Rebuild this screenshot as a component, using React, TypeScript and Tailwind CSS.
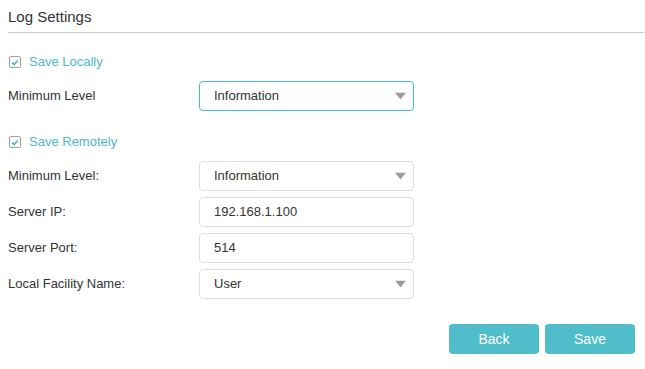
import { ReactNode } from "react"

const teal = "text-[#4cb8c6]"

function CheckRow({ label }: { label: string }) {
  return (
    <label className="flex items-center h-[20px] gap-[8px] pl-[1px]">
      <span className="w-[12px] h-[12px] border border-[#a0a0a0] rounded-[2px] flex items-center justify-center bg-white">
        <svg width="8" height="7" viewBox="0 0 8 7">
          <path d="M1 3.6 L3.1 5.6 L7 1.2" fill="none" stroke="#4cb8c6" strokeWidth="1.6" />
        </svg>
      </span>
      <span className={`text-[13px] ${teal}`}>{label}</span>
    </label>
  )
}

function Arrow() {
  return (
    <svg width="11" height="7" viewBox="0 0 11 7" className="absolute right-[7px] top-1/2 -translate-y-1/2">
      <path d="M0 0 H11 L5.5 7 Z" fill="#9a9a9a" />
    </svg>
  )
}

function Field({
  value,
  select,
  focused,
}: {
  value: string
  select?: boolean
  focused?: boolean
}) {
  return (
    <div
      className={`relative w-[215px] h-[30px] rounded-[4px] border flex items-center pl-[14px] text-[13px] text-[#333] ${
        focused ? "border-[#4cb8c6]" : "border-[#dedede]"
      }`}
    >
      {value}
      {select && <Arrow />}
    </div>
  )
}

function Row({ label, children }: { label: string; children: ReactNode }) {
  return (
    <div className="flex items-center">
      <div className="w-[191px] text-[13px] text-[#333]">{label}</div>
      {children}
    </div>
  )
}

export default function App() {
  return (
    <div className="w-[645px] h-[369px] bg-white font-['Liberation_Sans',Arial,sans-serif] pl-[8px] pr-[1px]">
      <div className="pt-[7px] pb-[5px] border-b border-[#c8c8c8]">
        <h2 className="text-[15px] leading-[20px] text-[#333]">Log Settings</h2>
      </div>

      <div className="mt-[19px]">
        <CheckRow label="Save Locally" />
      </div>
      <div className="mt-[9px]">
        <Row label="Minimum Level">
          <Field value="Information" select focused />
        </Row>
      </div>

      <div className="mt-[21px]">
        <CheckRow label="Save Remotely" />
      </div>
      <div className="mt-[9px] flex flex-col gap-[6px]">
        <Row label="Minimum Level:">
          <Field value="Information" select />
        </Row>
        <Row label="Server IP:">
          <Field value="192.168.1.100" />
        </Row>
        <Row label="Server Port:">
          <Field value="514" />
        </Row>
        <Row label="Local Facility Name:">
          <Field value="User" select />
        </Row>
      </div>

      <div className="mt-[25px] flex justify-end gap-[6px] pr-[9px]">
        <button className="w-[90px] h-[30px] rounded-[4px] bg-[#4fbdca] text-white text-[14px]">Back</button>
        <button className="w-[90px] h-[30px] rounded-[4px] bg-[#4fbdca] text-white text-[14px]">Save</button>
      </div>
    </div>
  )
}
